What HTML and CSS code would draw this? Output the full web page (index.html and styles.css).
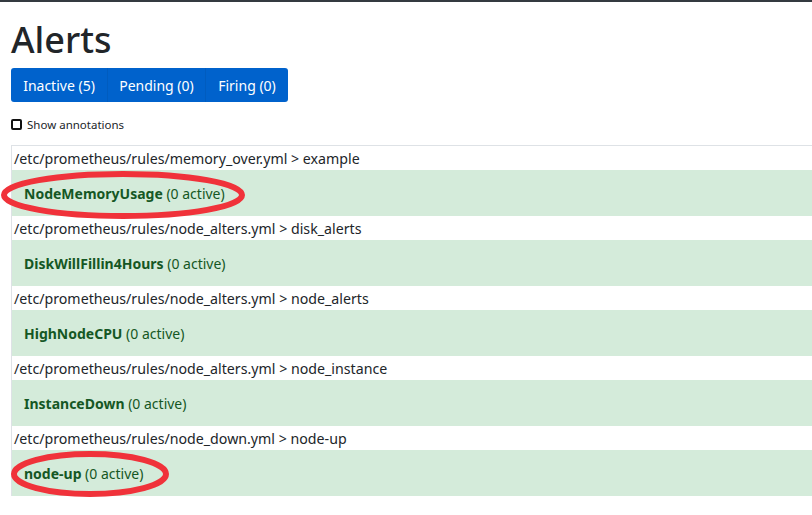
FILE: index.html
```html
<!DOCTYPE html>
<html>
<head>
<meta charset="utf-8">
<link rel="stylesheet" href="styles.css">
</head>
<body>
<div class="topbar"></div>
<div class="container">
  <h1 class="title">Alerts</h1>
  <div class="btn-group">
    <button class="btn b1">Inactive (5)</button>
    <button class="btn b2">Pending (0)</button>
    <button class="btn b3">Firing (0)</button>
  </div>
  <label class="check"><span class="box"></span>Show annotations</label>
  <div class="rules">
    <div class="group">
      <div class="path">/etc/prometheus/rules/memory_over.yml &gt; example</div>
      <div class="rule"><b>NodeMemoryUsage</b> (0 active)</div>
    </div>
    <div class="group">
      <div class="path">/etc/prometheus/rules/node_alters.yml &gt; disk_alerts</div>
      <div class="rule"><b>DiskWillFillin4Hours</b> (0 active)</div>
    </div>
    <div class="group">
      <div class="path">/etc/prometheus/rules/node_alters.yml &gt; node_alerts</div>
      <div class="rule"><b>HighNodeCPU</b> (0 active)</div>
    </div>
    <div class="group">
      <div class="path">/etc/prometheus/rules/node_alters.yml &gt; node_instance</div>
      <div class="rule"><b>InstanceDown</b> (0 active)</div>
    </div>
    <div class="group">
      <div class="path">/etc/prometheus/rules/node_down.yml &gt; node-up</div>
      <div class="rule"><b>node-up</b> (0 active)</div>
    </div>
  </div>
</div>
<svg class="mark mark1" width="250" height="52" viewBox="0 0 250 52"><ellipse cx="123" cy="25" rx="119" ry="21" fill="none" stroke="#f0323a" stroke-width="6"/></svg>
<svg class="mark mark2" width="164" height="52" viewBox="0 0 164 52"><ellipse cx="80" cy="24" rx="76" ry="20" fill="none" stroke="#f0323a" stroke-width="6"/></svg>
</body>
</html>
```
FILE: styles.css
```css
html, body {
  margin: 0;
  padding: 0;
  background: #fff;
  overflow: hidden;
}
body {
  font-family: "Noto Sans", "Open Sans", sans-serif;
  color: #212529;
  position: relative;
  width: 812px;
  height: 515px;
}
.topbar {
  height: 2px;
  background: #343a40;
}
.container {
  padding-left: 11px;
}
.title {
  margin: 0;
  padding-top: 14px;
  font-size: 36px;
  font-weight: 500;
  line-height: 48px;
  height: 52px;
}
.btn-group {
  display: flex;
  width: 277px;
  border-radius: 3px;
  overflow: hidden;
}
.btn {
  font-family: inherit;
  background: #0062cc;
  color: #fff;
  border: 0;
  border-left: 1px solid #005cbf;
  height: 34px;
  padding: 0;
  font-size: 14px;
  line-height: 36px;
  white-space: nowrap;
  text-align: center;
  flex: none;
}
.b1 { width: 96px; border-left: 0; }
.b2 { width: 98px; }
.b3 { width: 83px; }
.check {
  display: flex;
  align-items: center;
  margin-top: 14px;
  height: 16px;
  font-size: 11.5px;
  color: #212529;
}
.box {
  width: 7px;
  height: 7px;
  border: 2px solid #111;
  border-radius: 2px;
  margin-right: 5px;
}
.rules {
  margin-top: 13px;
  width: 820px;
  border-top: 1px solid #dee2e6;
  border-left: 1px solid #dee2e6;
}
.path {
  height: 24px;
  line-height: 25px;
  padding-left: 2px;
  font-size: 14.2px;
  background: #fff;
}
.rule {
  height: 46px;
  line-height: 47px;
  padding-left: 12px;
  background: #d4ebda;
  color: #155724;
  font-size: 14px;
}
.rule b { font-weight: 700; }
.mark {
  position: absolute;
}
.mark1 { left: 0; top: 170px; }
.mark2 { left: 10px; top: 450px; }
```
